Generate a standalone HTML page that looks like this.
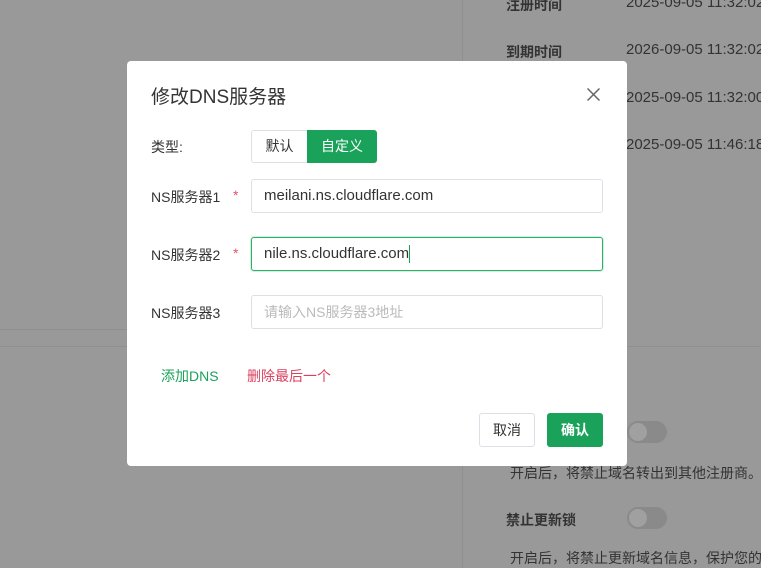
<!DOCTYPE html>
<html><head><meta charset="utf-8"><style>
*{box-sizing:border-box;margin:0;padding:0}
body{width:761px;height:568px;overflow:hidden;background:#999;font-family:"Liberation Sans","Noto Sans CJK SC",sans-serif;position:relative;color:#333}
.a{position:absolute}
.bg{color:#333;font-size:14px;white-space:nowrap}
.num{font-size:15px}
.modal{position:absolute;left:127px;top:61px;width:500px;height:405px;background:#fff;border-radius:4px}
.lbl{position:absolute;left:24px;font-size:14px;color:#333}
.inp{position:absolute;left:124px;width:352px;height:34px;border:1px solid #dcdfe6;border-radius:3px;font-size:15px;padding-left:12px;line-height:32px;color:#333}
.star{position:absolute;left:106px;color:#e0556f;font-size:14px}
.tog{position:absolute;width:40px;height:22px;border-radius:11px;background:#8a8a8a}
.tog i{position:absolute;left:2px;top:2px;width:18px;height:18px;border-radius:50%;background:#a0a0a0}
</style></head><body>
<div class="a" style="left:462px;top:0;width:1px;height:568px;background:#8f8f8f"></div>
<div class="a" style="left:0;top:329px;width:462px;height:1px;background:#8f8f8f"></div>
<div class="a" style="left:0;top:346px;width:761px;height:1px;background:#8f8f8f"></div>
<div class="a bg" style="left:506px;top:-5px;font-weight:bold">注册时间</div>
<div class="a bg num" style="left:626px;top:-6px">2025-09-05 11:32:02</div>
<div class="a bg" style="left:506px;top:42px;font-weight:bold">到期时间</div>
<div class="a bg num" style="left:626px;top:41px">2026-09-05 11:32:02</div>
<div class="a bg num" style="left:626px;top:89px">2025-09-05 11:32:00</div>
<div class="a bg num" style="left:626px;top:136px">2025-09-05 11:46:18</div>
<div class="tog" style="left:627px;top:421px"><i></i></div>
<div class="a bg" style="left:510px;top:463px">开启后，将禁止域名转出到其他注册商。</div>
<div class="a bg" style="left:506px;top:510px;font-weight:bold">禁止更新锁</div>
<div class="tog" style="left:627px;top:507px"><i></i></div>
<div class="a bg" style="left:510px;top:548px">开启后，将禁止更新域名信息，保护您的</div>

<div class="modal">
 <div class="a" style="left:24px;top:21px;font-size:19px;color:#333">修改DNS服务器</div>
 <svg class="a" style="left:460px;top:27px" width="13" height="13" viewBox="0 0 13 13"><path d="M0.5 0.5L12.5 12.5M12.5 0.5L0.5 12.5" stroke="#666" stroke-width="1.5"/></svg>
 <div class="lbl" style="top:76px">类型:</div>
 <div class="a" style="left:124px;top:69px;width:57px;height:33px;border:1px solid #dcdfe6;border-radius:3px 0 0 3px;font-size:14px;text-align:center;line-height:31px">默认</div>
 <div class="a" style="left:180px;top:69px;width:70px;height:33px;background:#1ba25a;border-radius:0 3px 3px 0;color:#fff;font-size:14px;text-align:center;line-height:33px">自定义</div>
 <div class="lbl" style="top:126px">NS服务器1</div><div class="star" style="top:126px">*</div>
 <div class="inp" style="top:118px">meilani.ns.cloudflare.com</div>
 <div class="lbl" style="top:184px">NS服务器2</div><div class="star" style="top:184px">*</div>
 <div class="inp" style="top:176px;border-color:#2bb06a;box-shadow:0 0 0 1px #d4efdf">nile.ns.cloudflare.com<span style="display:inline-block;width:1px;height:18px;background:#1ba25a;vertical-align:middle"></span></div>
 <div class="lbl" style="top:242px">NS服务器3</div>
 <div class="inp" style="top:234px;color:#bbb;font-size:14px">请输入NS服务器3地址</div>
 <div class="a" style="left:34px;top:305px;font-size:14px;color:#1ba25a">添加DNS</div>
 <div class="a" style="left:120px;top:305px;font-size:14px;color:#d9415f">删除最后一个</div>
 <div class="a" style="left:352px;top:352px;width:56px;height:34px;border:1px solid #dcdfe6;border-radius:3px;font-size:14px;text-align:center;line-height:32px">取消</div>
 <div class="a" style="left:420px;top:352px;width:56px;height:34px;background:#1ba25a;border-radius:3px;color:#fff;font-size:14px;text-align:center;line-height:34px;font-weight:bold">确认</div>
</div>
</body></html>
